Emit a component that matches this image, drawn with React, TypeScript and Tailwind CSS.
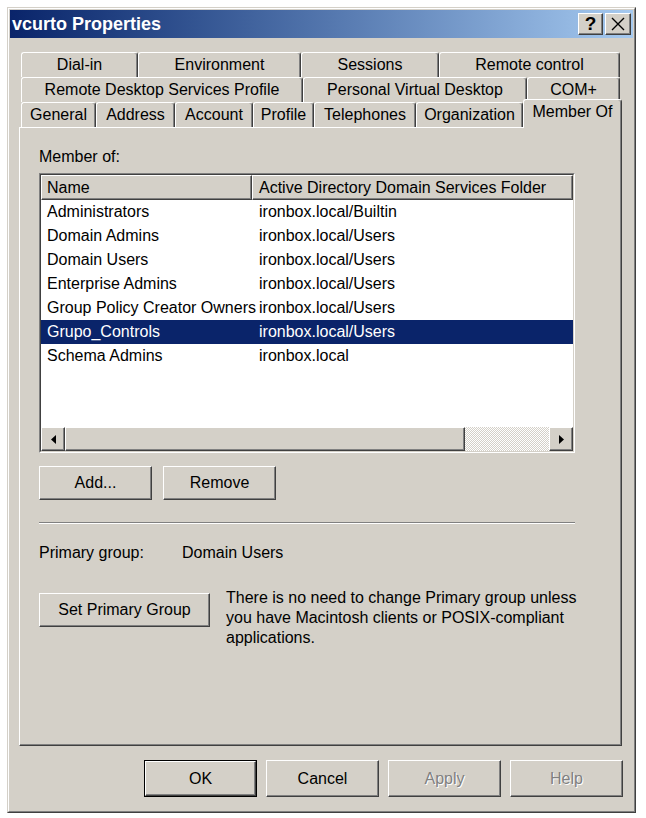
import React from "react";

const raised =
  "border border-t-white border-l-white border-r-[#404040] border-b-[#404040] shadow-[inset_-1px_-1px_0_#808080]";

function Tab({ label, w, selected }: { label: string; w: string; selected?: boolean }) {
  if (selected) {
    return (
      <div
        className={`${w} h-[29px] -mb-[1px] relative z-10 bg-[#d4d0c8] flex items-start justify-center pt-[3px] whitespace-nowrap border-t border-l border-r border-t-white border-l-white border-r-[#404040] rounded-t-[3px] shadow-[inset_-1px_0_0_#808080]`}
      >
        {label}
      </div>
    );
  }
  return (
    <div
      className={`${w} h-[25px] flex items-center justify-center whitespace-nowrap border-t border-l border-r border-t-white border-l-white border-r-[#404040] rounded-t-[3px] shadow-[inset_-1px_0_0_#808080]`}
    >
      {label}
    </div>
  );
}

function Btn({ label, w, h, disabled, def }: { label: string; w: string; h: string; disabled?: boolean; def?: boolean }) {
  const inner = (
    <div
      className={`${raised} w-full h-full flex items-center justify-center whitespace-nowrap ${
        disabled ? "text-[#808080] [text-shadow:1px_1px_0_#ffffff]" : "text-black"
      }`}
    >
      {label}
    </div>
  );
  if (def) {
    return <div className={`${w} ${h} border border-black`}>{inner}</div>;
  }
  return <div className={`${w} ${h}`}>{inner}</div>;
}

const rows: [string, string][] = [
  ["Administrators", "ironbox.local/Builtin"],
  ["Domain Admins", "ironbox.local/Users"],
  ["Domain Users", "ironbox.local/Users"],
  ["Enterprise Admins", "ironbox.local/Users"],
  ["Group Policy Creator Owners", "ironbox.local/Users"],
  ["Grupo_Controls", "ironbox.local/Users"],
  ["Schema Admins", "ironbox.local"],
];

export default function App() {
  return (
    <div
      className="w-[646px] h-[818px] bg-white pl-[7px] pt-[7px] text-[16px] leading-[18px] text-black"
      style={{ fontFamily: '"Liberation Sans", Arial, sans-serif' }}
    >
      <div className="w-[629px] h-[806px] bg-[#d4d0c8] border border-t-[#d4d0c8] border-l-[#d4d0c8] border-r-[#404040] border-b-[#404040]">
        <div className="h-full border border-t-white border-l-white border-r-[#808080] border-b-[#808080] p-[1px] flex flex-col">
          {/* Title bar */}
          <div className="h-[28px] flex items-center justify-between pl-[2px] pr-[2px] bg-gradient-to-r from-[#0a246a] to-[#a6caf0]">
            <span className="text-white font-bold text-[18px] leading-[20px]">vcurto Properties</span>
            <div className="flex gap-[2px]">
              <div className={`${raised} w-[25px] h-[22px] bg-[#d4d0c8] flex items-center justify-center font-bold text-[19px]`}>
                ?
              </div>
              <div className={`${raised} w-[26px] h-[22px] bg-[#d4d0c8] flex items-center justify-center`}>
                <svg width="14" height="14" viewBox="0 0 14 14">
                  <path d="M1 1 L13 13 M13 1 L1 13" stroke="#000" strokeWidth="1.4" />
                </svg>
              </div>
            </div>
          </div>

          {/* Body */}
          <div className="flex flex-col pl-[9px] pt-[14px]">
            {/* tabs */}
            <div className="flex flex-col pl-[2px] w-[603px]">
              <div className="flex h-[25px]">
                <Tab label="Dial-in" w="w-[117px]" />
                <Tab label="Environment" w="w-[163px]" />
                <Tab label="Sessions" w="w-[138px]" />
                <Tab label="Remote control" w="w-[181px]" />
              </div>
              <div className="flex h-[25px]">
                <Tab label="Remote Desktop Services Profile" w="w-[282px]" />
                <Tab label="Personal Virtual Desktop" w="w-[224px]" />
                <Tab label="COM+" w="w-[93px]" />
              </div>
              <div className="flex h-[25px] items-end">
                <Tab label="General" w="w-[75px]" />
                <Tab label="Address" w="w-[79px]" />
                <Tab label="Account" w="w-[78px]" />
                <Tab label="Profile" w="w-[61px]" />
                <Tab label="Telephones" w="w-[102px]" />
                <Tab label="Organization" w="w-[107px]" />
                <Tab label="Member Of" w="w-[99px]" selected />
              </div>
            </div>

            {/* panel */}
            <div className={`${raised} w-[603px] h-[619px] flex flex-col pl-[19px]`}>
              <div className="mt-[20px] h-[18px]">Member of:</div>

              {/* list box */}
              <div className="mt-[7px] w-[536px] h-[280px] border border-t-[#808080] border-l-[#808080] border-r-white border-b-white">
                <div className="h-full border border-t-[#404040] border-l-[#404040] border-r-[#d4d0c8] border-b-[#d4d0c8] bg-white flex flex-col">
                  <div className="flex h-[25px] shrink-0">
                    <div className={`${raised} w-[211px] shrink-0 h-full flex items-center pl-[5px] bg-[#d4d0c8]`}>Name</div>
                    <div className={`${raised} flex-1 h-full flex items-center pl-[6px] bg-[#d4d0c8] whitespace-nowrap`}>
                      Active Directory Domain Services Folder
                    </div>
                  </div>
                  <div className="flex-1 flex flex-col">
                    {rows.map(([n, f]) => {
                      const sel = n === "Grupo_Controls";
                      return (
                        <div
                          key={n}
                          className={`flex h-[24px] items-center ${sel ? "bg-[#0a246a] text-white" : ""}`}
                        >
                          <div className="w-[211px] shrink-0 pl-[6px] whitespace-nowrap">{n}</div>
                          <div className="pl-[7px] whitespace-nowrap">{f}</div>
                        </div>
                      );
                    })}
                  </div>
                  {/* scrollbar */}
                  <div className="flex h-[24px] shrink-0">
                    <div className={`${raised} w-[24px] h-full bg-[#d4d0c8] flex items-center justify-center`}>
                      <svg width="5" height="9" viewBox="0 0 5 9">
                        <path d="M5 0 L0 4.5 L5 9 Z" fill="#000" />
                      </svg>
                    </div>
                    <div className={`${raised} w-[400px] h-full bg-[#d4d0c8]`} />
                    <div className="flex-1 h-full bg-[repeating-conic-gradient(#d4d0c8_0_25%,#ffffff_0_50%)] bg-[length:2px_2px]" />
                    <div className={`${raised} w-[24px] h-full bg-[#d4d0c8] flex items-center justify-center`}>
                      <svg width="5" height="9" viewBox="0 0 5 9">
                        <path d="M0 0 L5 4.5 L0 9 Z" fill="#000" />
                      </svg>
                    </div>
                  </div>
                </div>
              </div>

              {/* Add / Remove */}
              <div className="mt-[13px] flex gap-[11px]">
                <Btn label="Add..." w="w-[113px]" h="h-[34px]" />
                <Btn label="Remove" w="w-[113px]" h="h-[34px]" />
              </div>

              {/* separator */}
              <div className="mt-[22px] w-[536px] h-[2px] border-t border-t-[#808080] border-b border-b-white" />

              {/* primary group */}
              <div className="mt-[20px] flex h-[18px]">
                <div className="w-[143px]">Primary group:</div>
                <div>Domain Users</div>
              </div>

              <div className="mt-[26px] flex items-start">
                <div className="mt-[5px]">
                  <Btn label="Set Primary Group" w="w-[171px]" h="h-[34px]" />
                </div>
                <div className="ml-[16px] leading-[20px]">
                  There is no need to change Primary group unless
                  <br />
                  you have Macintosh clients or POSIX-compliant
                  <br />
                  applications.
                </div>
              </div>
            </div>

            {/* bottom buttons */}
            <div className="mt-[14px] w-[604px] flex justify-end gap-[9px]">
              <Btn label="OK" w="w-[113px]" h="h-[37px]" def />
              <Btn label="Cancel" w="w-[113px]" h="h-[37px]" />
              <Btn label="Apply" w="w-[113px]" h="h-[37px]" disabled />
              <Btn label="Help" w="w-[113px]" h="h-[37px]" disabled />
            </div>
          </div>
        </div>
      </div>
    </div>
  );
}
